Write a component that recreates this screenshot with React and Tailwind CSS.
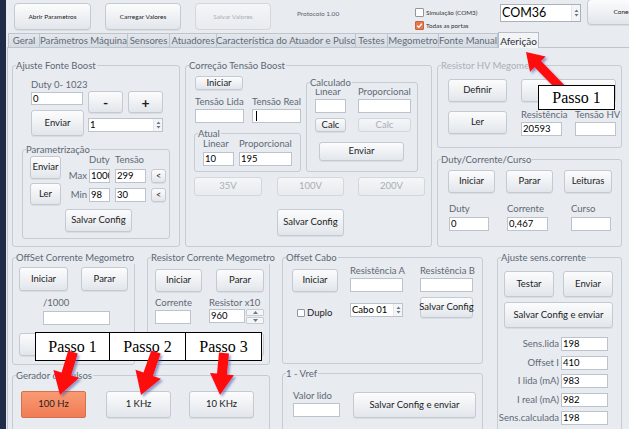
import React from 'react';

// Classic WinForms-ish look: light gradient buttons, thin grey group borders
const BTN =
  'flex shrink-0 items-center justify-center whitespace-nowrap rounded-[3px] border border-[#c4cad2] bg-linear-to-b from-[#fcfcfd] to-[#e2e6eb] text-[#1c1c1c] shadow-[0_1px_0_rgba(0,0,0,0.06)]';
const BTN_OFF =
  'flex shrink-0 items-center justify-center whitespace-nowrap rounded-[3px] border border-[#d2d7dd] bg-linear-to-b from-[#f4f6f8] to-[#e8ebef] text-[#a8afb7]';
const FIELD =
  'flex shrink-0 items-center overflow-hidden whitespace-nowrap border border-[#bcc3cc] bg-white pl-[1px] text-[9.5px] leading-none text-black';
const LABEL = 'whitespace-nowrap text-[9.5px] leading-[12px] text-[#5f6976]';

function Btn({ className = '', off, size = 'text-[9.5px]', children }) {
  return <div className={`${off ? BTN_OFF : BTN} ${size} ${className}`}>{children}</div>;
}

function Field({ className = '', children }) {
  return <div className={`${FIELD} ${className}`}>{children}</div>;
}

function UpDown() {
  return (
    <svg width="5" height="8" viewBox="0 0 5 8">
      <path d="M2.5 0.5 L4.5 3 L0.5 3 Z" fill="#6d7682" />
      <path d="M2.5 7.5 L4.5 5 L0.5 5 Z" fill="#6d7682" />
    </svg>
  );
}

function Spin({ className = '', value, size = 'text-[9.5px]', edge = 'border-[#bcc3cc]' }) {
  return (
    <div className={`flex shrink-0 items-stretch border bg-white ${edge} ${className}`}>
      <span className={`flex flex-1 items-center overflow-hidden whitespace-nowrap pl-[1px] leading-none text-black ${size}`}>
        {value}
      </span>
      <span className="flex w-[9px] items-center justify-center border-l border-[#e3e7eb] bg-[#f3f5f7]">
        <UpDown />
      </span>
    </div>
  );
}

function Check({ checked, small }) {
  return (
    <span
      className={`flex shrink-0 items-center justify-center rounded-[1px] border ${
        small ? 'h-[8px] w-[8px]' : 'h-[9px] w-[9px]'
      } ${checked ? 'border-[#c9623a] bg-[#e8784a]' : 'border-[#8e97a2] bg-white'}`}
    >
      {checked && (
        <svg width="7" height="7" viewBox="0 0 7 7">
          <path d="M1 3.6 L2.8 5.3 L6 1.6" stroke="#fff" strokeWidth="1.3" fill="none" />
        </svg>
      )}
    </span>
  );
}

function Group({ title, className = '', muted, children }) {
  return (
    <div className={`relative shrink-0 rounded-[3px] border border-[#c6ccd4] ${className}`}>
      <span
        className={`absolute -top-[7px] left-[3px] bg-[#e8ebef] pr-[1px] text-[9.5px] leading-[13px] whitespace-nowrap ${
          muted ? 'text-[#a9b0b9]' : 'text-[#5c6775]'
        }`}
      >
        {title}
      </span>
      {children}
    </div>
  );
}

function arrowPoints(x1, y1, x2, y2, shaft, head, headLen) {
  const dx = x2 - x1;
  const dy = y2 - y1;
  const len = Math.hypot(dx, dy);
  const ux = dx / len;
  const uy = dy / len;
  const nx = -uy;
  const ny = ux;
  const bx = x2 - ux * headLen;
  const by = y2 - uy * headLen;
  const pts = [
    [x1 + (nx * shaft) / 2, y1 + (ny * shaft) / 2],
    [bx + (nx * shaft) / 2, by + (ny * shaft) / 2],
    [bx + (nx * head) / 2, by + (ny * head) / 2],
    [x2, y2],
    [bx - (nx * head) / 2, by - (ny * head) / 2],
    [bx - (nx * shaft) / 2, by - (ny * shaft) / 2],
    [x1 - (nx * shaft) / 2, y1 - (ny * shaft) / 2],
  ];
  return pts.map((p) => p.map((v) => v.toFixed(1)).join(',')).join(' ');
}

function Arrows({ list, id }) {
  return (
    <svg className="pointer-events-none absolute left-0 top-0" width="629" height="429">
      <defs>
        <filter id={id} x="-20%" y="-20%" width="140%" height="140%">
          <feDropShadow dx="2" dy="2" stdDeviation="1.3" floodColor="#3d5aa8" floodOpacity="0.55" />
        </filter>
      </defs>
      {list.map((a, i) => (
        <polygon key={i} points={arrowPoints(...a)} fill="#ff0d0d" filter={`url(#${id})`} />
      ))}
    </svg>
  );
}

function Passo({ className = '', children }) {
  return (
    <div
      className={`absolute flex items-center justify-center border border-black bg-white font-['Liberation_Serif',serif] text-[16px] text-black ${className}`}
    >
      {children}
    </div>
  );
}

const TABS = [
  ['Geral', 'w-[31px]'],
  ['Parâmetros Máquina', 'w-[88px]'],
  ['Sensores', 'w-[42px]'],
  ['Atuadores', 'w-[47px]'],
  ['Característica do Atuador e Pulso', 'w-[139px]'],
  ['Testes', 'w-[32px]'],
  ['Megometro', 'w-[51px]'],
  ['Fonte Manual', 'w-[60px]'],
];

export default function App() {
  return (
    <div className="relative flex h-[429px] w-[629px] overflow-hidden bg-[#e8ebef] font-['Lato','Liberation_Sans',sans-serif]">
      <div className="w-[6px] shrink-0 bg-[#1f2b47]" />

      <div className="flex min-w-0 flex-1 flex-col">
        {/* top bar */}
        <div className="flex h-[32px] shrink-0 items-start">
          <Btn size="text-[6.5px]" className="ml-[8px] mt-[3px] h-[27px] w-[77px] rounded-[4px]">
            Abrir Parametros
          </Btn>
          <Btn size="text-[6.5px]" className="ml-[14px] mt-[3px] h-[27px] w-[76px] rounded-[4px]">
            Carregar Valores
          </Btn>
          <Btn off size="text-[6.5px]" className="ml-[14px] mt-[3px] h-[27px] w-[76px] rounded-[4px]">
            Salvar Valores
          </Btn>
          <div className="ml-[26px] mt-[9px] w-[118px] shrink-0 whitespace-nowrap text-[6.5px] leading-[9px] text-[#5a6470]">
            Protocolo 1.00
          </div>
          <div className="mt-[8px] flex w-[85px] shrink-0 flex-col gap-[4px]">
            <div className="flex h-[9px] items-center gap-[2px] whitespace-nowrap text-[6.3px] text-[#333]">
              <Check />
              <span>Simulação (COM3)</span>
            </div>
            <div className="flex h-[9px] items-center gap-[2px] whitespace-nowrap text-[6.3px] text-[#333]">
              <Check checked />
              <span>Todas as portas</span>
            </div>
          </div>
          <Spin size="text-[12.5px]" edge="border-[#a9b1bb]" value="COM36" className="mt-[4px] h-[18px] w-[81px]" />
          <Btn size="text-[6.5px]" className="ml-[6px] -mt-[1px] h-[26px] w-[79px] rounded-[4px]">
            Conectar
          </Btn>
        </div>

        {/* tabs */}
        <div className="flex h-[15px] shrink-0 items-end pl-[2px]">
          {TABS.map(([t, w], i) => (
            <div
              key={t}
              className={`flex h-[14px] shrink-0 items-center justify-center whitespace-nowrap border-l border-t border-[#bcc4ce] bg-linear-to-b from-[#e4e8ed] to-[#d6dbe2] text-[9.6px] leading-none text-[#5f6a78] ${w} ${
                i === TABS.length - 1 ? 'border-r' : ''
              }`}
            >
              {t}
            </div>
          ))}
          <div className="relative z-10 -mb-px flex h-[16px] w-[41px] shrink-0 items-center justify-center border border-b-0 border-[#b5bdc8] bg-[#f2f4f6] text-[10px] leading-none text-[#2a313c]">
            Aferição
          </div>
        </div>

        {/* tab page */}
        <div className="ml-[1px] flex-1 border-l border-t border-[#bcc4ce] pl-[4px] pt-[17px]">
          <div className="flex gap-[5px]">
            {/* Ajuste Fonte Boost */}
            <Group title="Ajuste Fonte Boost" className="h-[182px] w-[168px]">
              <div className="ml-[18px] mt-[12px] flex">
                <div className="flex w-[53px] flex-col">
                  <div className={`${LABEL} h-[14px] leading-[14px]`}>Duty 0- 1023</div>
                  <Field className="h-[13px] w-[52px]">0</Field>
                  <Btn className="mt-[5px] h-[26px] w-[53px]">Enviar</Btn>
                </div>
                <div className="ml-[4px] flex flex-col pt-[13px]">
                  <div className="flex gap-[5px]">
                    <Btn size="text-[14px] font-bold" className="h-[22px] w-[35px]">
                      -
                    </Btn>
                    <Btn size="text-[14px] font-bold" className="h-[22px] w-[35px]">
                      +
                    </Btn>
                  </div>
                  <Spin value="1" className="mt-[5px] h-[14px] w-[75px]" />
                </div>
              </div>
              <Group title="Parametrização" className="ml-[9px] mt-[13px] h-[90px] w-[148px]">
                <div className="flex">
                  <div className="ml-[7px] mt-[6px] flex flex-col gap-[4px]">
                    <Btn className="h-[23px] w-[31px]">Enviar</Btn>
                    <Btn className="h-[22px] w-[31px]">Ler</Btn>
                  </div>
                  <div className="ml-[4px] mt-[4px] flex flex-col">
                    <div className="flex h-[15px] items-start pl-[24px]">
                      <span className={`${LABEL} w-[26px]`}>Duty</span>
                      <span className={LABEL}>Tensão</span>
                    </div>
                    <div className="flex h-[14px] items-center">
                      <span className={`${LABEL} w-[22px] text-right`}>Max</span>
                      <Field className="ml-[2px] h-[14px] w-[21px]">1000</Field>
                      <Field className="ml-[5px] h-[14px] w-[31px]">299</Field>
                      <Btn size="text-[9px]" className="ml-[5px] h-[14px] w-[15px] rounded-[2px]">
                        &lt;
                      </Btn>
                    </div>
                    <div className="mt-[5px] flex h-[14px] items-center">
                      <span className={`${LABEL} w-[22px] text-right`}>Min</span>
                      <Field className="ml-[2px] h-[14px] w-[21px]">98</Field>
                      <Field className="ml-[5px] h-[14px] w-[31px]">30</Field>
                      <Btn size="text-[9px]" className="ml-[5px] h-[14px] w-[15px] rounded-[2px]">
                        &lt;
                      </Btn>
                    </div>
                  </div>
                </div>
                <Btn className="ml-[42px] mt-[4px] h-[23px] w-[67px]">Salvar Config</Btn>
              </Group>
            </Group>

            {/* Correção Tensão Boost */}
            <Group title="Correção Tensão Boost" className="h-[182px] w-[247px]">
              <div className="flex pl-[8px]">
                <div className="flex w-[107px] flex-col">
                  <Btn className="ml-[1px] mt-[10px] h-[14px] w-[48px]">Iniciar</Btn>
                  <div className="mt-[6px] flex gap-[8px] pl-[1px]">
                    <span className={`${LABEL} w-[49px]`}>Tensão Lida</span>
                    <span className={`${LABEL} w-[49px]`}>Tensão Real</span>
                  </div>
                  <div className="mt-[1px] flex gap-[8px] pl-[1px]">
                    <Field className="h-[14px] w-[49px]" />
                    <Field className="h-[14px] w-[49px]">
                      <span className="ml-[2px] h-[10px] w-px bg-black" />
                    </Field>
                  </div>
                  <Group title="Atual" className="mt-[10px] h-[39px] w-[107px]">
                    <div className="mt-[4px] flex gap-[5px] pl-[8px]">
                      <span className={`${LABEL} w-[31px]`}>Linear</span>
                      <span className={LABEL}>Proporcional</span>
                    </div>
                    <div className="mt-[2px] flex gap-[5px] pl-[8px]">
                      <Field className="h-[14px] w-[31px]">10</Field>
                      <Field className="h-[14px] w-[53px]">195</Field>
                    </div>
                  </Group>
                </div>
                <Group title="Calculado" className="ml-[5px] mt-[16px] h-[90px] w-[112px]">
                  <div className="mt-[3px] flex gap-[12px] pl-[8px]">
                    <span className={`${LABEL} w-[31px]`}>Linear</span>
                    <span className={LABEL}>Proporcional</span>
                  </div>
                  <div className="mt-[1px] flex gap-[12px] pl-[8px]">
                    <Field className="h-[14px] w-[31px]" />
                    <Field className="h-[14px] w-[53px]" />
                  </div>
                  <div className="mt-[5px] flex gap-[12px] pl-[8px]">
                    <Btn className="h-[14px] w-[31px] rounded-[2px]">Calc</Btn>
                    <Btn off className="h-[14px] w-[53px] rounded-[2px]">
                      Calc
                    </Btn>
                  </div>
                  <Btn className="ml-[12px] mt-[10px] h-[19px] w-[85px]">Enviar</Btn>
                </Group>
              </div>
              <div className="ml-[8px] mt-[5px] flex">
                <Btn off className="h-[19px] w-[68px]">
                  35V
                </Btn>
                <Btn off className="ml-[15px] h-[19px] w-[67px]">
                  100V
                </Btn>
                <Btn off className="ml-[14px] h-[19px] w-[67px]">
                  200V
                </Btn>
              </div>
              <Btn className="ml-[91px] mt-[13px] h-[27px] w-[67px]">Salvar Config</Btn>
            </Group>

            <div className="flex flex-col gap-[11px]">
              {/* Resistor HV Megometro */}
              <Group muted title="Resistor HV Megometro" className="h-[83px] w-[185px]">
                <div className="flex pl-[10px] pt-[13px]">
                  <div className="flex flex-col gap-[9px]">
                    <Btn className="h-[23px] w-[59px]">Definir</Btn>
                    <Btn className="h-[23px] w-[59px]">Ler</Btn>
                  </div>
                  <div className="ml-[14px] flex flex-col">
                    <Btn className="h-[23px] w-[95px]">Medir</Btn>
                    <div className="mt-[7px] flex gap-[13px]">
                      <span className={`${LABEL} w-[41px]`}>Resistência</span>
                      <span className={`${LABEL} w-[41px]`}>Tensão HV</span>
                    </div>
                    <div className="mt-[1px] flex gap-[13px]">
                      <Field className="h-[14px] w-[41px]">20593</Field>
                      <Field className="h-[14px] w-[41px]" />
                    </div>
                  </div>
                </div>
              </Group>

              {/* Duty/Corrente/Curso */}
              <Group title="Duty/Corrente/Curso" className="h-[88px] w-[185px]">
                <div className="flex gap-[11px] pl-[10px] pt-[10px]">
                  <Btn className="h-[23px] w-[47px]">Iniciar</Btn>
                  <Btn className="h-[23px] w-[47px]">Parar</Btn>
                  <Btn className="h-[23px] w-[48px]">Leituras</Btn>
                </div>
                <div className="mt-[10px] flex pl-[11px]">
                  <div className="flex w-[58px] flex-col">
                    <span className={LABEL}>Duty</span>
                    <Field className="mt-[2px] h-[14px] w-[40px]">0</Field>
                  </div>
                  <div className="flex w-[64px] flex-col">
                    <span className={LABEL}>Corrente</span>
                    <Field className="mt-[2px] h-[14px] w-[41px]">0,467</Field>
                  </div>
                  <div className="flex flex-col">
                    <span className={LABEL}>Curso</span>
                    <Field className="mt-[2px] h-[14px] w-[40px]" />
                  </div>
                </div>
              </Group>
            </div>
          </div>

          {/* bottom row */}
          <div className="mt-[10px] flex">
            <div className="flex w-[258px] shrink-0 flex-col">
              <div className="flex gap-[12px]">
                <Group title="OffSet Corrente Megometro" className="h-[108px] w-[123px]">
                  <div className="flex gap-[13px] pl-[6px] pt-[9px]">
                    <Btn className="h-[24px] w-[49px]">Iniciar</Btn>
                    <Btn className="h-[24px] w-[47px]">Parar</Btn>
                  </div>
                  <div className={`${LABEL} ml-[30px] mt-[6px]`}>/1000</div>
                  <Field className="ml-[30px] mt-[2px] h-[14px] w-[67px]" />
                  <Btn className="ml-[6px] mt-[8px] h-[23px] w-[62px]">Salvar</Btn>
                </Group>
                <Group title="Resistor Corrente Megometro" className="h-[108px] w-[123px]">
                  <div className="flex gap-[14px] pl-[7px] pt-[11px]">
                    <Btn className="h-[23px] w-[47px]">Iniciar</Btn>
                    <Btn className="h-[23px] w-[48px]">Parar</Btn>
                  </div>
                  <div className="mt-[5px] flex pl-[7px]">
                    <div className="flex w-[54px] flex-col">
                      <span className={LABEL}>Corrente</span>
                      <Field className="mt-[1px] h-[14px] w-[36px]" />
                    </div>
                    <div className="flex flex-col">
                      <span className={LABEL}>Resistor x10</span>
                      <div className="flex">
                        <Field className="h-[14px] w-[36px]">960</Field>
                        <div className="ml-px flex w-[18px] flex-col gap-px">
                          <div className="flex h-[7px] items-center justify-center rounded-[1px] border border-[#c8cdd4] bg-[#f3f5f7]">
                            <svg width="5" height="3" viewBox="0 0 5 3">
                              <path d="M2.5 0 L5 3 L0 3 Z" fill="#6d7682" />
                            </svg>
                          </div>
                          <div className="flex h-[7px] items-center justify-center rounded-[1px] border border-[#c8cdd4] bg-[#f3f5f7]">
                            <svg width="5" height="3" viewBox="0 0 5 3">
                              <path d="M2.5 3 L5 0 L0 0 Z" fill="#6d7682" />
                            </svg>
                          </div>
                        </div>
                      </div>
                    </div>
                  </div>
                  <Btn className="ml-[68px] mt-[9px] h-[23px] w-[48px]">Salvar</Btn>
                </Group>
              </div>
              <Group title="Gerador de Pulsos" className="mt-[10px] h-[70px] w-[258px]">
                <div className="flex pl-[8px] pt-[15px]">
                  <div className="flex h-[27px] w-[65px] shrink-0 items-center justify-center rounded-[2px] border border-[#d2714c] bg-linear-to-b from-[#f89a74] to-[#f07c55] text-[9.5px] text-[#2b211c]">
                    100 Hz
                  </div>
                  <Btn className="ml-[20px] h-[27px] w-[65px]">1 KHz</Btn>
                  <Btn className="ml-[18px] h-[27px] w-[65px]">10 KHz</Btn>
                </div>
              </Group>
            </div>

            <div className="ml-[12px] flex flex-col">
              <Group title="Offset Cabo" className="h-[107px] w-[201px]">
                <div className="flex pl-[9px] pt-[7px]">
                  <div className="flex w-[46px] flex-col">
                    <Btn className="mt-[4px] h-[23px] w-[46px]">Iniciar</Btn>
                    <div className="ml-[5px] mt-[16px] flex items-center gap-[2px]">
                      <Check small />
                      <span className="text-[9.5px] leading-none text-[#222]">Duplo</span>
                    </div>
                  </div>
                  <div className="ml-[12px] flex flex-col">
                    <span className={LABEL}>Resistência A</span>
                    <Field className="mt-[1px] h-[14px] w-[53px]" />
                    <Spin value="Cabo 01" className="mt-[11px] h-[14px] w-[53px]" />
                  </div>
                  <div className="ml-[15px] flex flex-col">
                    <span className={LABEL}>Resistência B</span>
                    <Field className="mt-[1px] h-[14px] w-[53px]" />
                    <Btn className="mt-[5px] h-[21px] w-[53px] overflow-visible">Salvar Config</Btn>
                  </div>
                </div>
              </Group>
              <Group title="1 - Vref" className="mt-[9px] h-[70px] w-[201px]">
                <div className="flex pl-[10px]">
                  <div className="flex flex-col pt-[16px]">
                    <span className={LABEL}>Valor lido</span>
                    <Field className="mt-[1px] h-[14px] w-[47px]" />
                  </div>
                  <Btn className="ml-[13px] mt-[18px] h-[26px] w-[123px]">Salvar Config e enviar</Btn>
                </div>
              </Group>
            </div>

            <Group title="Ajuste sens.corrente" className="ml-[14px] h-[190px] w-[125px]">
              <div className="flex gap-[9px] pl-[6px] pt-[13px]">
                <Btn className="h-[26px] w-[50px]">Testar</Btn>
                <Btn className="h-[26px] w-[50px]">Enviar</Btn>
              </div>
              <Btn className="ml-[6px] mt-[5px] h-[26px] w-[109px]">Salvar Config e enviar</Btn>
              <div className="mt-[9px] flex flex-col gap-[4.5px]">
                {[
                  ['Sens.lida', '198'],
                  ['Offset I', '410'],
                  ['I lida (mA)', '983'],
                  ['I real (mA)', '982'],
                  ['Sens.calculada', '198'],
                ].map(([l, v]) => (
                  <div key={l} className="flex h-[14px] items-center">
                    <span className={`${LABEL} w-[61px] text-right`}>{l}</span>
                    <Field className="ml-[2px] h-[14px] w-[47px]">{v}</Field>
                  </div>
                ))}
              </div>
            </Group>
          </div>
        </div>
      </div>

      {/* annotations */}
      <Arrows id="sh1" list={[[563, 90, 526, 52, 9, 22, 17]]} />
      <Passo className="left-[538px] top-[85px] h-[25px] w-[77px]">Passo 1</Passo>
      <Passo className="left-[35px] top-[332px] h-[29px] w-[75px]">Passo 1</Passo>
      <Passo className="left-[109px] top-[332px] h-[29px] w-[77px]">Passo 2</Passo>
      <Passo className="left-[185px] top-[332px] h-[29px] w-[77px]">Passo 3</Passo>
      <Arrows
        id="sh2"
        list={[
          [73, 352, 60, 395, 10, 27, 22],
          [156, 352, 141, 395, 10, 27, 22],
          [224, 353, 220, 395, 10, 24, 21],
        ]}
      />
    </div>
  );
}
